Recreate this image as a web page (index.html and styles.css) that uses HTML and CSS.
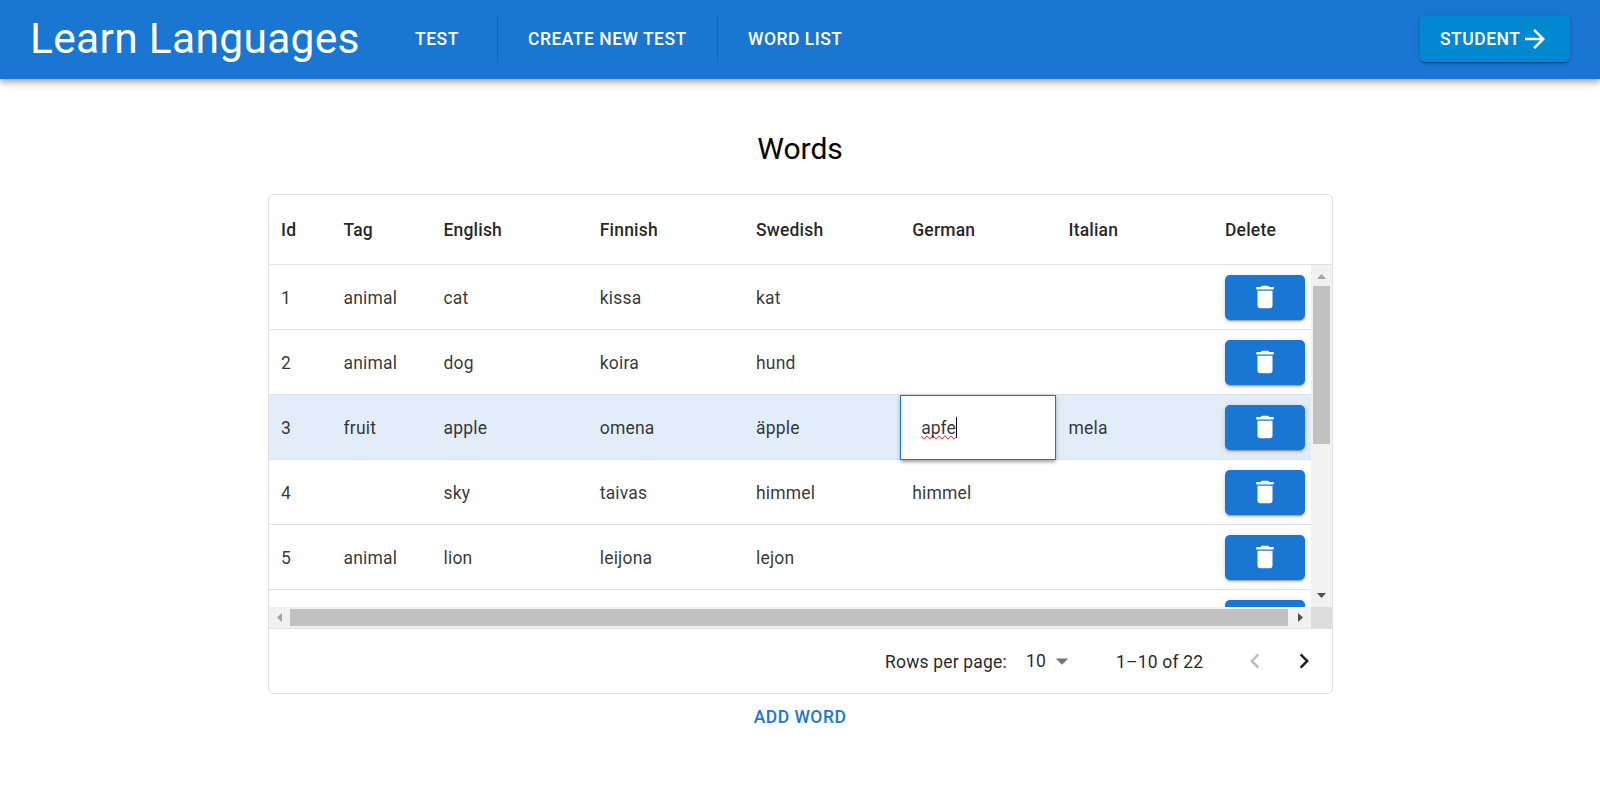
FILE: index.html
```html
<!DOCTYPE html>
<html lang="en">
<head>
<meta charset="utf-8">
<title>Learn Languages</title>
<link rel="stylesheet" href="styles.css">
</head>
<body>
<svg class="defs" width="0" height="0"><defs>
<symbol id="trash" viewBox="0 0 24 24"><path d="M6 19c0 1.1.9 2 2 2h8c1.100 0 2-.9 2-2V7H6v12zM19 4h-3.500l-1-1h-5l-1 1H5v2h14V4z"/></symbol>
</defs></svg>
<header class="appbar">
  <h1 class="brand">Learn Languages</h1>
  <nav class="nav">
    <a class="nav-link nav-test">TEST</a>
    <a class="nav-link nav-create">CREATE NEW TEST</a>
    <a class="nav-link nav-words">WORD LIST</a>
  </nav>
  <button class="student">STUDENT<svg class="arrow" viewBox="0 0 24 24"><path d="M12 4l-1.410 1.410L16.170 11H4v2h12.170l-5.580 5.590L12 20l8-8z"/></svg></button>
</header>
<main class="page">
  <h2 class="heading">Words</h2>
  <section class="grid">
    <div class="row head">
      <div>Id</div><div>Tag</div><div>English</div><div>Finnish</div><div>Swedish</div><div>German</div><div>Italian</div><div>Delete</div>
    </div>
    <div class="viewport">
      <div class="rows">
        <div class="row"><div>1</div><div>animal</div><div>cat</div><div>kissa</div><div>kat</div><div></div><div></div><div><button class="del"><svg><use href="#trash"/></svg></button></div></div>
        <div class="row"><div>2</div><div>animal</div><div>dog</div><div>koira</div><div>hund</div><div></div><div></div><div><button class="del"><svg><use href="#trash"/></svg></button></div></div>
        <div class="row selected"><div>3</div><div>fruit</div><div>apple</div><div>omena</div><div>äpple</div><div class="editing"><span class="misspelt">apfe</span><i class="caret"></i></div><div>mela</div><div><button class="del"><svg><use href="#trash"/></svg></button></div></div>
        <div class="row"><div>4</div><div></div><div>sky</div><div>taivas</div><div>himmel</div><div>himmel</div><div></div><div><button class="del"><svg><use href="#trash"/></svg></button></div></div>
        <div class="row"><div>5</div><div>animal</div><div>lion</div><div>leijona</div><div>lejon</div><div></div><div></div><div><button class="del"><svg><use href="#trash"/></svg></button></div></div>
        <div class="row"><div></div><div></div><div></div><div></div><div></div><div></div><div></div><div><button class="del"><svg><use href="#trash"/></svg></button></div></div>
      </div>
      <div class="vbar">
        <svg class="tick off" viewBox="0 0 21 21"><path d="M6 14h9l-4.500-5z"/></svg>
        <div class="vthumb"></div>
        <svg class="tick" viewBox="0 0 21 21"><path d="M6 7h9l-4.500 5z"/></svg>
      </div>
      <div class="hbar">
        <svg class="tick off" viewBox="0 0 21 21"><path d="M13 6v9l-5-4.500z"/></svg>
        <div class="hthumb"></div>
        <svg class="tick" viewBox="0 0 21 21"><path d="M8 6v9l5-4.500z"/></svg>
      </div>
      <div class="corner"></div>
    </div>
    <footer class="pager">
      <span class="label">Rows per page:</span>
      <span class="size">10</span>
      <svg class="drop" viewBox="0 0 24 24"><path d="M7 10l5 5 5-5z"/></svg>
      <span class="range">1–10 of 22</span>
      <svg class="chev off" viewBox="0 0 24 24"><path d="M15.410 7.410L14 6l-6 6 6 6 1.410-1.410L10.830 12z"/></svg>
      <svg class="chev" viewBox="0 0 24 24"><path d="M10 6L8.590 7.410 13.170 12l-4.580 4.590L10 18l6-6z"/></svg>
    </footer>
  </section>
  <button class="add">ADD WORD</button>
</main>
</body>
</html>
```
FILE: styles.css
```css
* { box-sizing: border-box; }
body {
  margin: 0;
  height: 796px;
  overflow: hidden;
  background: #fff;
  font-family: Roboto, "Liberation Sans", sans-serif;
  font-size: 17.5px;
  color: rgba(0, 0, 0, 0.87);
}
.defs { position: absolute; }
button { font: inherit; border: 0; padding: 0; }
.appbar {
  display: flex;
  align-items: center;
  height: 79px;
  padding: 0 30px 1px;
  background: #1976d2;
  color: #fff;
  box-shadow: 0 2.500px 5px -1px rgba(0,0,0,.2), 0 5px 6px 0 rgba(0,0,0,.14), 0 1px 12.500px 0 rgba(0,0,0,.12);
}
.brand {
  margin: 0;
  width: 355px;
  font-size: 42.500px;
  font-weight: 400;
  line-height: 52px;
  letter-spacing: 0.00735em;
  white-space: nowrap;
}
.nav { display: flex; flex: 1; }
.nav-link, .student, .add {
  font-weight: 500;
  letter-spacing: 0.02857em;
}
.nav-link {
  height: 46px;
  line-height: 47px;
  padding-left: 30px;
  border-right: 1px solid #1565c0;
  white-space: nowrap;
}
.nav-test { width: 113px; }
.nav-create { width: 220px; }
.nav-words { border-right: 0; }
.student {
  display: flex;
  align-items: center;
  width: 150px;
  height: 46px;
  padding-left: 20px;
  border-radius: 5px;
  background: #0288d1;
  color: #fff;
  box-shadow: 0 3px 1px -2px rgba(0,0,0,.2), 0 2px 2px 0 rgba(0,0,0,.14), 0 1px 6px 0 rgba(0,0,0,.12);
}
.arrow { width: 30px; height: 30px; fill: #fff; }
.page { display: flex; flex-direction: column; align-items: center; }
.heading {
  margin: 49px 0 25px;
  font-size: 30px;
  font-weight: 400;
  line-height: 41px;
  color: #000;
}
.grid {
  width: 1065px;
  height: 500px;
  border: 1px solid #e0e0e0;
  border-radius: 5px;
  margin-left: 1px;
}
.row {
  display: grid;
  grid-template-columns: 62.500px 100px repeat(5, 156.250px) 105px;
  height: 65px;
  border-bottom: 1px solid #e0e0e0;
  line-height: 66px;
  letter-spacing: 0.01071em;
}
.row > div { padding-left: 12px; white-space: nowrap; height: 64px; }
.row > div:last-child { padding-left: 12.250px; }
.row.head { height: 70px; line-height: 71px; font-weight: 500; }
.rows .row { color: rgba(0, 0, 0, 0.8); }
.viewport {
  display: grid;
  grid-template-columns: 1042px 21px;
  grid-template-rows: 342px 21px;
  height: 364px;
  border-bottom: 1px solid #e0e0e0;
}
.rows { overflow: hidden; }
.selected { background: #e3edf9; }
.row > .editing {
  display: flex;
  align-items: center;
  width: 155.500px;
  height: 65px;
  padding-left: 20px;
  border: 1px solid #1976d2;
  background: #fff;
  box-shadow: 0 3px 3px -1px rgba(0,0,0,.25), 0 1px 5px 0 rgba(0,0,0,.2);
}
.misspelt { line-height: 21px; padding-top: 1px; letter-spacing: 0; text-decoration-line: spelling-error; }
.caret { width: 1px; height: 21px; background: #000; }
.del {
  display: flex;
  align-items: center;
  justify-content: center;
  width: 80px;
  height: 45px;
  margin-top: 10px;
  padding-bottom: 1px;
  border-radius: 5px;
  background: #1976d2;
  box-shadow: 0 3px 1px -2px rgba(0,0,0,.2), 0 2px 2px 0 rgba(0,0,0,.14), 0 1px 6px 0 rgba(0,0,0,.12);
}
.del svg { width: 30px; height: 30px; fill: #fff; }
.vbar, .hbar { display: flex; background: #f1f1f1; justify-content: space-between; }
.vbar { flex-direction: column; }
.tick { width: 21px; height: 21px; fill: #505050; }
.tick.off { fill: #a3a3a3; }
.vthumb { width: 17px; height: 158px; margin: 0 2px auto; background: #c1c1c1; }
.hthumb { width: 998px; height: 17px; margin: 2px auto 0 0; background: #c1c1c1; }
.corner { background: #dcdcdc; }
.pager {
  display: flex;
  align-items: center;
  height: 64px;
  padding-left: 616px;
  letter-spacing: 0.01071em;
  white-space: nowrap;
}
.pager > * { flex-shrink: 0; }
.label { width: 141px; padding-top: 2px; }
.size { width: 24px; }
.drop { width: 30px; height: 30px; fill: #757575; margin-left: -3px; }
.range { width: 124px; margin-left: 39px; padding-top: 2px; }
.chev { width: 30px; height: 30px; fill: #212121; }
.chev.off { margin-right: 19px; fill: #bdbdbd; }
.add { margin-top: 7px; height: 31px; background: none; color: #1976d2; }
```
